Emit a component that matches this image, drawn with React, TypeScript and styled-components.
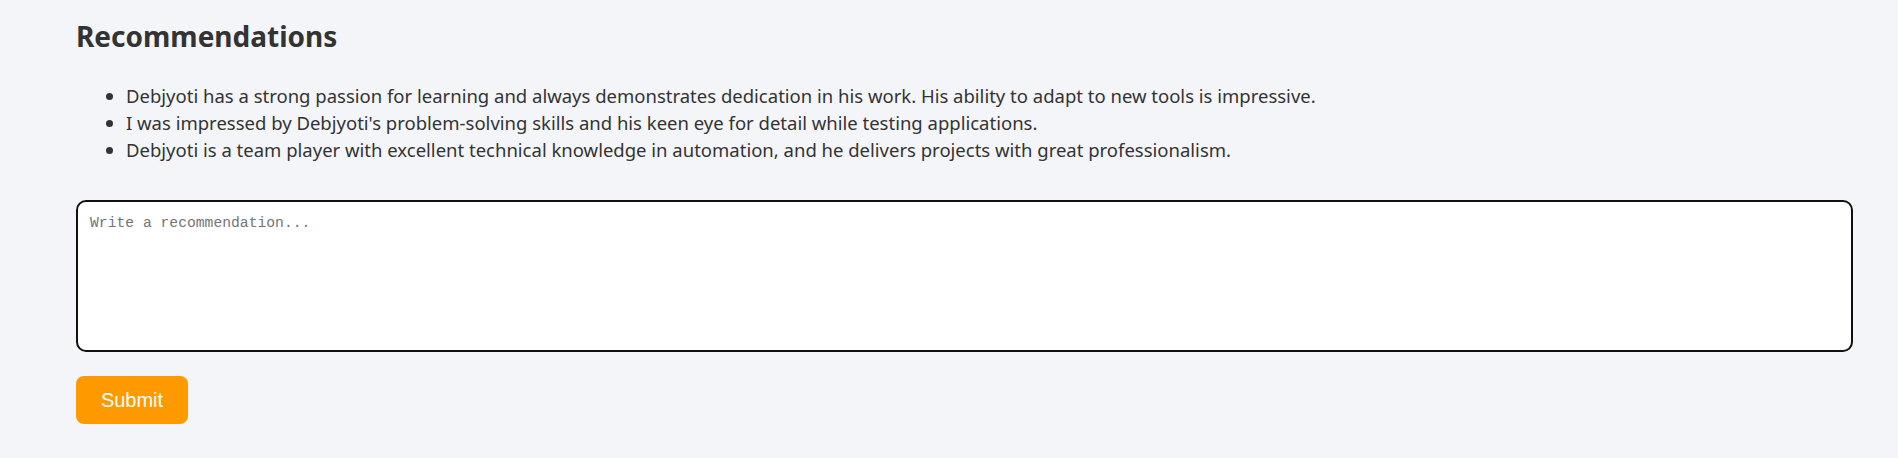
import React from "react";
import styled, { createGlobalStyle } from "styled-components";

const Global = createGlobalStyle`
  html, body { margin: 0; padding: 0; background: #f4f5f9; }
  body { font-family: "Noto Sans", "Open Sans", sans-serif; color: #333; }
`;

const Section = styled.section`
  display: flex;
  flex-direction: column;
  align-items: flex-start;
  padding: 0 45px 0 76px;
`;

const Title = styled.h2`
  margin: 16px 0 0;
  font-size: 28px;
  line-height: 40px;
  font-weight: 700;
  color: #333;
`;

const List = styled.ul`
  margin: 26px 0 0;
  padding-left: 50px;
  font-size: 18.5px;
  line-height: 27px;
  color: #333;
`;

const Item = styled.li``;

const TextArea = styled.textarea`
  box-sizing: border-box;
  width: 100%;
  height: 152px;
  margin-top: 37px;
  padding: 13px 12px 12px;
  border: 2px solid #111;
  border-radius: 10px;
  background: #fff;
  font-family: "Liberation Mono", monospace;
  font-size: 14.7px;
  resize: none;
  outline: none;
  &::placeholder { color: #757575; }
`;

const Button = styled.button`
  margin-top: 24px;
  width: 112px;
  height: 48px;
  border: none;
  border-radius: 8px;
  background: #ff9900;
  color: #fff;
  font-family: "Liberation Sans", Arial, sans-serif;
  font-size: 20px;
  cursor: pointer;
`;

const items = [
  "Debjyoti has a strong passion for learning and always demonstrates dedication in his work. His ability to adapt to new tools is impressive.",
  "I was impressed by Debjyoti's problem-solving skills and his keen eye for detail while testing applications.",
  "Debjyoti is a team player with excellent technical knowledge in automation, and he delivers projects with great professionalism.",
];

export default function App() {
  return (
    <>
      <Global />
      <Section>
        <Title>Recommendations</Title>
        <List>
          {items.map((t) => (
            <Item key={t}>{t}</Item>
          ))}
        </List>
        <TextArea placeholder="Write a recommendation..." />
        <Button>Submit</Button>
      </Section>
    </>
  );
}
